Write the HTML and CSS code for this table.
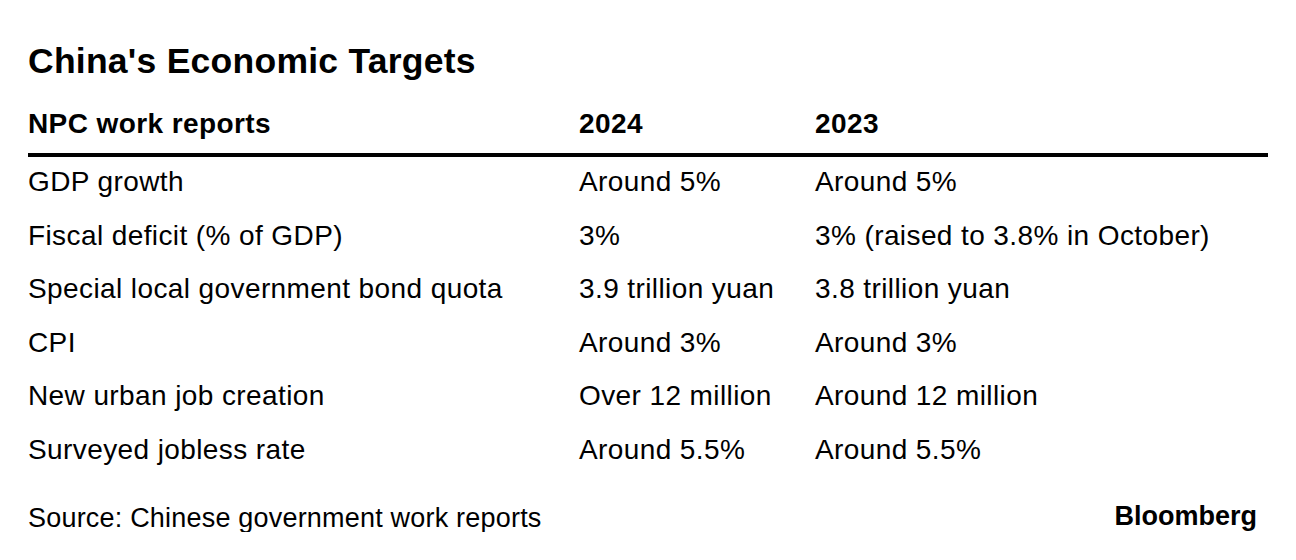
FILE: index.html
```html
<!DOCTYPE html>
<html lang="en">
<head>
<meta charset="utf-8">
<title>China's Economic Targets</title>
<link rel="stylesheet" href="styles.css">
</head>
<body>
<div class="chart">
  <h1 class="title">China's Economic Targets</h1>
  <div class="table">
    <div class="row head">
      <div class="cell">NPC work reports</div>
      <div class="cell">2024</div>
      <div class="cell">2023</div>
    </div>
    <div class="row">
      <div class="cell">GDP growth</div>
      <div class="cell">Around 5%</div>
      <div class="cell">Around 5%</div>
    </div>
    <div class="row">
      <div class="cell">Fiscal deficit (% of GDP)</div>
      <div class="cell">3%</div>
      <div class="cell">3% (raised to 3.8% in October)</div>
    </div>
    <div class="row">
      <div class="cell">Special local government bond quota</div>
      <div class="cell">3.9 trillion yuan</div>
      <div class="cell">3.8 trillion yuan</div>
    </div>
    <div class="row">
      <div class="cell">CPI</div>
      <div class="cell">Around 3%</div>
      <div class="cell">Around 3%</div>
    </div>
    <div class="row">
      <div class="cell">New urban job creation</div>
      <div class="cell">Over 12 million</div>
      <div class="cell">Around 12 million</div>
    </div>
    <div class="row">
      <div class="cell">Surveyed jobless rate</div>
      <div class="cell">Around 5.5%</div>
      <div class="cell">Around 5.5%</div>
    </div>
  </div>
  <div class="footer">
    <div class="source">Source: Chinese government work reports</div>
    <div class="logo">Bloomberg</div>
  </div>
</div>
</body>
</html>
```

FILE: styles.css
```css
html, body {
  margin: 0;
  padding: 0;
  background: #ffffff;
}

body {
  font-family: "Liberation Sans", Arial, sans-serif;
  color: #000000;
}

.chart {
  width: 1240px;
  padding: 43px 28px 0 28px;
}

.title {
  margin: 0;
  font-size: 35.5px;
  line-height: 36px;
  font-weight: 700;
  letter-spacing: 0.25px;
}

.table {
  margin-top: 31px;
}

.row {
  display: grid;
  grid-template-columns: 551px 236px 1fr;
  font-size: 28px;
  letter-spacing: 0.4px;
  line-height: 50.6px;
  padding-bottom: 3px;
}

.row.head {
  font-weight: 700;
  line-height: 28px;
  padding-bottom: 15px;
  border-bottom: 4px solid #000000;
}

.cell {
  white-space: nowrap;
}

.footer {
  display: flex;
  justify-content: space-between;
  align-items: flex-start;
  margin-top: 26px;
}

.source {
  font-size: 27px;
  line-height: 27px;
  letter-spacing: 0.2px;
}

.logo {
  font-size: 27px;
  line-height: 27px;
  font-weight: 700;
  margin-top: -2px;
  margin-right: 11px;
}
```
